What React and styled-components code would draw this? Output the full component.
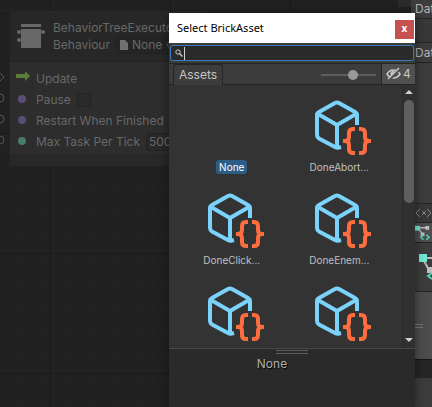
import React from "react";
import styled, { createGlobalStyle } from "styled-components";

const GlobalStyle = createGlobalStyle`
  * { box-sizing: border-box; }
  html, body, #root { height: 100%; }
  body {
    margin: 0;
    overflow: hidden;
    background: #212121;
    font-family: Inter, "Liberation Sans", sans-serif;
    font-size: 12px;
    line-height: 16px;
  }
  button, input { font: inherit; color: inherit; margin: 0; }
  svg { display: block; flex: none; }
`;

const Editor = styled.div`
  position: relative;
  display: grid;
  grid-template-columns: minmax(0, 1fr) 21px;
  min-height: 100vh;
  overflow: hidden;
`;

/* Graph canvas */
const Canvas = styled.main`
  position: relative;
  overflow: hidden;
  background-color: #212121;
  background-image:
    linear-gradient(#1a1a1a 1px, transparent 1px),
    linear-gradient(90deg, #1a1a1a 1px, transparent 1px),
    linear-gradient(#202020 1px, transparent 1px),
    linear-gradient(90deg, #202020 1px, transparent 1px);
  background-size: 120px 120px, 120px 120px, 12px 12px, 12px 12px;
  background-position: 0 13px, 50px 0, 0 1px, 2px 0;
`;

const PortColumn = styled.svg`
  position: absolute;
  left: 0;
  top: 62px;
`;

const GraphNode = styled.section`
  position: absolute;
  left: 10px;
  top: 11px;
  width: 196px;
  color: #686868;
  white-space: nowrap;
`;

const NodeHeader = styled.header`
  display: flex;
  gap: 8px;
  height: 51px;
  padding: 9px 0 0 7px;
  background: rgba(41, 41, 41, 0.8);
  border-bottom: 1px solid #242424;
`;

const NodeTitle = styled.div`
  display: flex;
  flex-direction: column;
`;

const NodeSubtitle = styled.div`
  display: flex;
  align-items: center;
  gap: 6px;
`;

const ObjectField = styled.button`
  display: flex;
  align-items: center;
  gap: 3px;
  height: 18px;
  padding: 0 3px;
  border: 1px solid #222;
  border-radius: 3px;
  background: #252525;
`;

const NodeBody = styled.div`
  display: grid;
  grid-auto-rows: 21px;
  align-items: center;
  padding: 6px 0 2px 6px;
  background: rgba(49, 49, 49, 0.8);
`;

const PortRow = styled.label`
  display: flex;
  align-items: center;
  gap: 6px;
`;

const NodeCheck = styled.input`
  appearance: none;
  width: 14px;
  height: 14px;
  border: 1px solid #242424;
  border-radius: 2px;
  background: #2a2a2a;
`;

const NumberField = styled.input`
  width: 50px;
  height: 18px;
  padding: 0 2px;
  border: 1px solid #222;
  border-radius: 3px;
  background: #282828;
`;

const NodeFooter = styled.footer`
  height: 12px;
  background: #282828;
`;

const CanvasBadge = styled.div`
  position: absolute;
  top: 0;
  right: 0;
  width: 13px;
  height: 7px;
  background: #2b2b2b;
`;

/* Inspector strip */
const Inspector = styled.aside`
  display: flex;
  flex-direction: column;
  background: #3c3c3c;
  color: #b4b4b4;
  overflow: hidden;
`;

const tones = { plain: "#3c3c3c", raised: "#4d4d4d", header: "#383838", deep: "#262626" };

const Section = styled.div`
  display: flex;
  flex: ${(p) => (p.$fill ? "1 0 auto" : "none")};
  align-items: center;
  height: ${(p) => (p.$fill ? "auto" : `${p.$h}px`)};
  padding-left: 4px;
  background: ${(p) => tones[p.$tone || "plain"]};
  border-bottom: ${(p) => (p.$fill ? "0" : "1px")} solid ${(p) => p.$line || "#242424"};
  white-space: nowrap;
`;

/* Asset picker window */
const Picker = styled.div`
  position: absolute;
  top: 13px;
  right: 17px;
  bottom: 0;
  left: 169px;
  display: flex;
  flex-direction: column;
  background: #333;
  color: #c4c4c4;
  box-shadow: 0 2px 10px rgba(0, 0, 0, 0.45);
`;

const TitleBar = styled.header`
  display: flex;
  align-items: center;
  justify-content: space-between;
  height: 30px;
  padding: 0 1px 0 8px;
  background: #fff;
  color: #000;
`;

const Title = styled.h1`
  margin: 0;
  font: 400 11px/16px "Noto Sans", "Open Sans", sans-serif;
`;

const CloseButton = styled.button`
  width: 19px;
  height: 19px;
  margin-top: 2px;
  padding: 0 0 2px;
  border: 0;
  background: #c75050;
  color: #fff;
  font: 700 10px/16px "Open Sans", sans-serif;
`;

const SearchRow = styled.div`
  padding: 2px 1px;
  background: #3b3d38;
`;

const SearchBox = styled.label`
  display: flex;
  align-items: center;
  height: 16px;
  padding-left: 4px;
  border: 1px solid #3a79bb;
  border-radius: 3px;
  background: #2a2a2a;
`;

const Caret = styled.span`
  width: 1px;
  height: 13px;
  margin-left: 1px;
  background: #d2d2d2;
`;

const SearchInput = styled.input`
  flex: 1;
  min-width: 0;
  height: 14px;
  padding: 0;
  border: 0;
  outline: 0;
  background: transparent;
`;

const TabStrip = styled.div`
  display: flex;
  align-items: stretch;
  height: 22px;
  padding-left: 4px;
  border-top: 1px solid #232323;
  background: #3c3c3c;
  box-shadow: inset 0 -1px #252525;
`;

const Tab = styled.button`
  padding: 0 5px;
  border: 1px solid #252525;
  border-bottom: 0;
  border-radius: 3px 3px 0 0;
  background: #3c3c3c;
`;

const SizeSlider = styled.input`
  appearance: none;
  width: 55px;
  margin: 0 5px 0 auto;
  background: transparent;
  &::-webkit-slider-runnable-track {
    height: 2px;
    background: #5e5e5e;
  }
  &::-webkit-slider-thumb {
    appearance: none;
    width: 10px;
    height: 10px;
    margin-top: -4px;
    border-radius: 50%;
    background: #999;
  }
`;

const HiddenToggle = styled.button`
  display: flex;
  align-items: center;
  gap: 2px;
  width: 34px;
  margin-bottom: 1px;
  padding: 0 0 0 4px;
  border: 0;
  border-left: 1px solid #252525;
  background: #505050;
`;

const Browser = styled.div`
  display: flex;
  flex: 1;
  min-height: 0;
`;

const AssetGrid = styled.div`
  display: grid;
  flex: 1;
  grid-template-columns: repeat(auto-fill, minmax(107px, 1fr));
  grid-auto-rows: 93px;
  padding: 10px 9px 0;
  overflow: hidden;
`;

const AssetCell = styled.button`
  display: flex;
  flex-direction: column;
  align-items: center;
  gap: 1px;
  padding: 0;
  border: 0;
  background: transparent;
`;

const Thumb = styled.div`
  width: 64px;
  height: 64px;
`;

const AssetName = styled.span`
  padding: 0 3px;
  border-radius: 3px;
  background: ${(p) => (p.$selected ? "#2c5d87" : "transparent")};
  color: ${(p) => (p.$selected ? "#fff" : "#c0c0c0")};
  font-size: 10px;
  line-height: 14px;
`;

const ScrollBar = styled.div`
  display: flex;
  flex-direction: column;
  align-items: center;
  width: 13px;
  padding: 5px 0 6px;
  border-left: 1px solid #2b2b2b;
  background: #303030;
`;

const ScrollTrack = styled.div`
  flex: 1;
  padding: 6px 0 4px;
`;

const ScrollThumb = styled.div`
  width: 10px;
  height: 44%;
  border-radius: 5px;
  background: #5f5f5f;
`;

const Preview = styled.footer`
  display: flex;
  flex-direction: column;
  align-items: center;
  height: 59px;
  padding-top: 1px;
  border-top: 1px solid #484848;
  background: #2a2a2a;
`;

const Grip = styled.div`
  width: 32px;
  height: 4px;
  border: solid #5c5c5c;
  border-width: 1px 0;
`;

const PreviewName = styled.div`
  margin-top: 2px;
  padding-right: 40px;
  color: #b0b0b0;
  text-shadow: 1px 1px 1px #000;
`;

function CubeIcon() {
  return (
    <svg width="64" height="64" viewBox="0 0 64 64" fill="none">
      <g stroke="#7bd2fb" strokeWidth="4" strokeLinejoin="round">
        <path d="M34 52 L32 52.500 Q30 53 28 52 L12 43.500 Q10 42 10 40 V20 Q10 18 12 17 L28 8 Q30 7 32 8 L48 17 Q50 18 50 20 V30" />
        <path d="M11 19 L30 30 L49 19 M30 30 V52" />
      </g>
      <g stroke="#fd6d3d" strokeWidth="4">
        <path d="M48 34 H46 Q42 34 42 38 V42 Q42 46 38 46 H36 M38 46 Q42 46 42 50 V54 Q42 58 46 58 H48" />
        <path d="M52 34 H54 Q58 34 58 38 V42 Q58 46 62 46 H64 M62 46 Q58 46 58 50 V54 Q58 58 54 58 H52" />
      </g>
    </svg>
  );
}

function TreeIcon({ size }) {
  return (
    <svg width={size} height={size} viewBox="0 0 18 18" fill="none">
      <path d="M3 4 H14 M4 5 L8 11" stroke="#b8b8b8" strokeWidth="1.500" />
      <path d="M11 2 h4 v4 h-4z M6 9 h4 v4 h-4z" fill="#bebebe" />
      <path d="M0 2 h5 v5 h-5z" fill="#72ead6" />
      <path d="M9 11.500 L6 14 L9 16.500 M12 11.500 L15 14 L12 16.500" stroke="#55d3b5" strokeWidth="1.500" />
    </svg>
  );
}

function Arrow({ down }) {
  return (
    <svg width="8" height="4" viewBox="0 0 8 4">
      <path d={down ? "M0 0 H8 L4 4z" : "M0 4 H8 L4 0z"} fill="#cfcfcf" />
    </svg>
  );
}

function PortDot({ color }) {
  return (
    <svg width="14" height="10" viewBox="0 0 14 10">
      <circle cx="6" cy="4" r="4" fill={color} />
    </svg>
  );
}

const assets = ["None", "DoneAbort...", "DoneClick...", "DoneEnem...", "", ""];

export default function App() {
  return (
    <>
      <GlobalStyle />
      <Editor>
        <Canvas>
          <CanvasBadge />
          <PortColumn width="6" height="90" fill="none" stroke="#555">
            <path d="M-4 11 L0 11 L4 15 L0 19" />
            <circle cx="0" cy="36" r="4" />
            <circle cx="0" cy="57" r="4" />
            <circle cx="0" cy="78" r="4" />
          </PortColumn>
          <GraphNode>
            <NodeHeader>
              <svg width="28" height="34" viewBox="0 0 28 34" fill="#686868">
                <path d="M4 4 h20 v3 h-20z M4 9 h20 v19 h-20z" />
                <circle cx="2" cy="12" r="2" />
                <circle cx="26" cy="12" r="2" />
                <circle cx="2" cy="20" r="2" />
              </svg>
              <NodeTitle>
                <span>BehaviorTreeExecutor</span>
                <NodeSubtitle>
                  Behaviour
                  <ObjectField>
                    <svg width="9" height="10" viewBox="0 0 9 10">
                      <path d="M0 0 H5 L8 3 V10 H0z" fill="#707070" />
                    </svg>
                    None
                    <svg width="10" height="10" viewBox="0 0 10 10" fill="none" stroke="#5a5a5a">
                      <circle cx="6" cy="5" r="3.500" />
                    </svg>
                  </ObjectField>
                </NodeSubtitle>
              </NodeTitle>
            </NodeHeader>
            <NodeBody>
              <PortRow as="div">
                <svg width="14" height="14" viewBox="0 0 14 14">
                  <path d="M0 2 H9 V-1 L14 4 L9 9 V6 H0z" fill="#5a7d38" />
                </svg>
                Update
              </PortRow>
              <PortRow>
                <PortDot color="#5a4d76" />
                Pause
                <NodeCheck type="checkbox" />
              </PortRow>
              <PortRow>
                <PortDot color="#5a4d76" />
                Restart When Finished
                <NodeCheck type="checkbox" />
              </PortRow>
              <PortRow>
                <PortDot color="#467a6c" />
                Max Task Per Tick
                <NumberField defaultValue="500" />
              </PortRow>
            </NodeBody>
            <NodeFooter />
          </GraphNode>
        </Canvas>

        <Inspector>
          <Section $h={19}>Data</Section>
          <Section $h={24} $tone="header" />
          <Section $h={20}>Data</Section>
          <Section $h={141} />
          <Section $h={19} $tone="header">
            <svg width="17" height="10" viewBox="0 0 17 10" fill="none" stroke="#898989">
              <path d="M5 1 L1 5 L5 9 M12 1 L16 5 L12 9 M7 3 L11 7 M11 3 L7 7" />
            </svg>
          </Section>
          <Section $h={20} $tone="raised">
            <TreeIcon size={17} />
          </Section>
          <Section $h={49}>
            <svg width="17" height="34" viewBox="0 0 17 34" fill="none">
              <path d="M8 8 H17 M8 9 L15 22" stroke="#b8b8b8" strokeWidth="2" />
              <path d="M12 17 h5 v6 h-5z" fill="#bebebe" />
              <path d="M4 4 h8 v8 h-8z" fill="#72ead6" />
              <path d="M17 23 L13 26 L17 29" stroke="#55d3b5" strokeWidth="2" />
            </svg>
          </Section>
          <Section $h={68} $tone="raised" $line="#151515">
            <svg width="14" height="6" viewBox="0 0 14 6" stroke="#777">
              <path d="M0 1.500 H8 M0 4.500 H8" />
            </svg>
          </Section>
          <Section $h={18} $tone="deep" />
          <Section $fill />
        </Inspector>

        <Picker role="dialog" aria-label="Select BrickAsset">
          <TitleBar>
            <Title>Select BrickAsset</Title>
            <CloseButton aria-label="Close">x</CloseButton>
          </TitleBar>
          <SearchRow>
            <SearchBox>
              <svg width="8" height="8" viewBox="0 0 8 8" fill="none" stroke="#c4c4c4">
                <circle cx="3" cy="3" r="2.200" />
                <path d="M4.500 4.500 L7.500 7.500" strokeWidth="1.500" />
              </svg>
              <Caret />
              <SearchInput type="text" aria-label="Search assets" />
            </SearchBox>
          </SearchRow>
          <TabStrip>
            <Tab role="tab" aria-selected="true">Assets</Tab>
            <SizeSlider type="range" min="0" max="100" defaultValue="60" aria-label="Icon size" />
            <HiddenToggle aria-label="Hidden packages: 4">
              <svg width="15" height="14" viewBox="0 0 15 14" fill="none" stroke="#c8c8c8">
                <path d="M1 7 Q3.500 3 7.500 3 T14 7 Q11.500 11 7.500 11 T1 7z" strokeWidth="1.500" />
                <path d="M7 4 Q4 5 5 8 L8 5z" fill="#c8c8c8" />
                <path d="M3 13 L13 2" stroke="#505050" strokeWidth="3" />
                <path d="M2 12 L13 1" strokeWidth="1.500" />
              </svg>
              4
            </HiddenToggle>
          </TabStrip>
          <Browser>
            <AssetGrid>
              {assets.map((name, i) => (
                <AssetCell key={i} aria-label={name || "Asset"}>
                  <Thumb>{i > 0 && <CubeIcon />}</Thumb>
                  {name && <AssetName $selected={i === 0}>{name}</AssetName>}
                </AssetCell>
              ))}
            </AssetGrid>
            <ScrollBar>
              <Arrow />
              <ScrollTrack>
                <ScrollThumb />
              </ScrollTrack>
              <Arrow down />
            </ScrollBar>
          </Browser>
          <Preview>
            <Grip />
            <PreviewName>None</PreviewName>
          </Preview>
        </Picker>
      </Editor>
    </>
  );
}
